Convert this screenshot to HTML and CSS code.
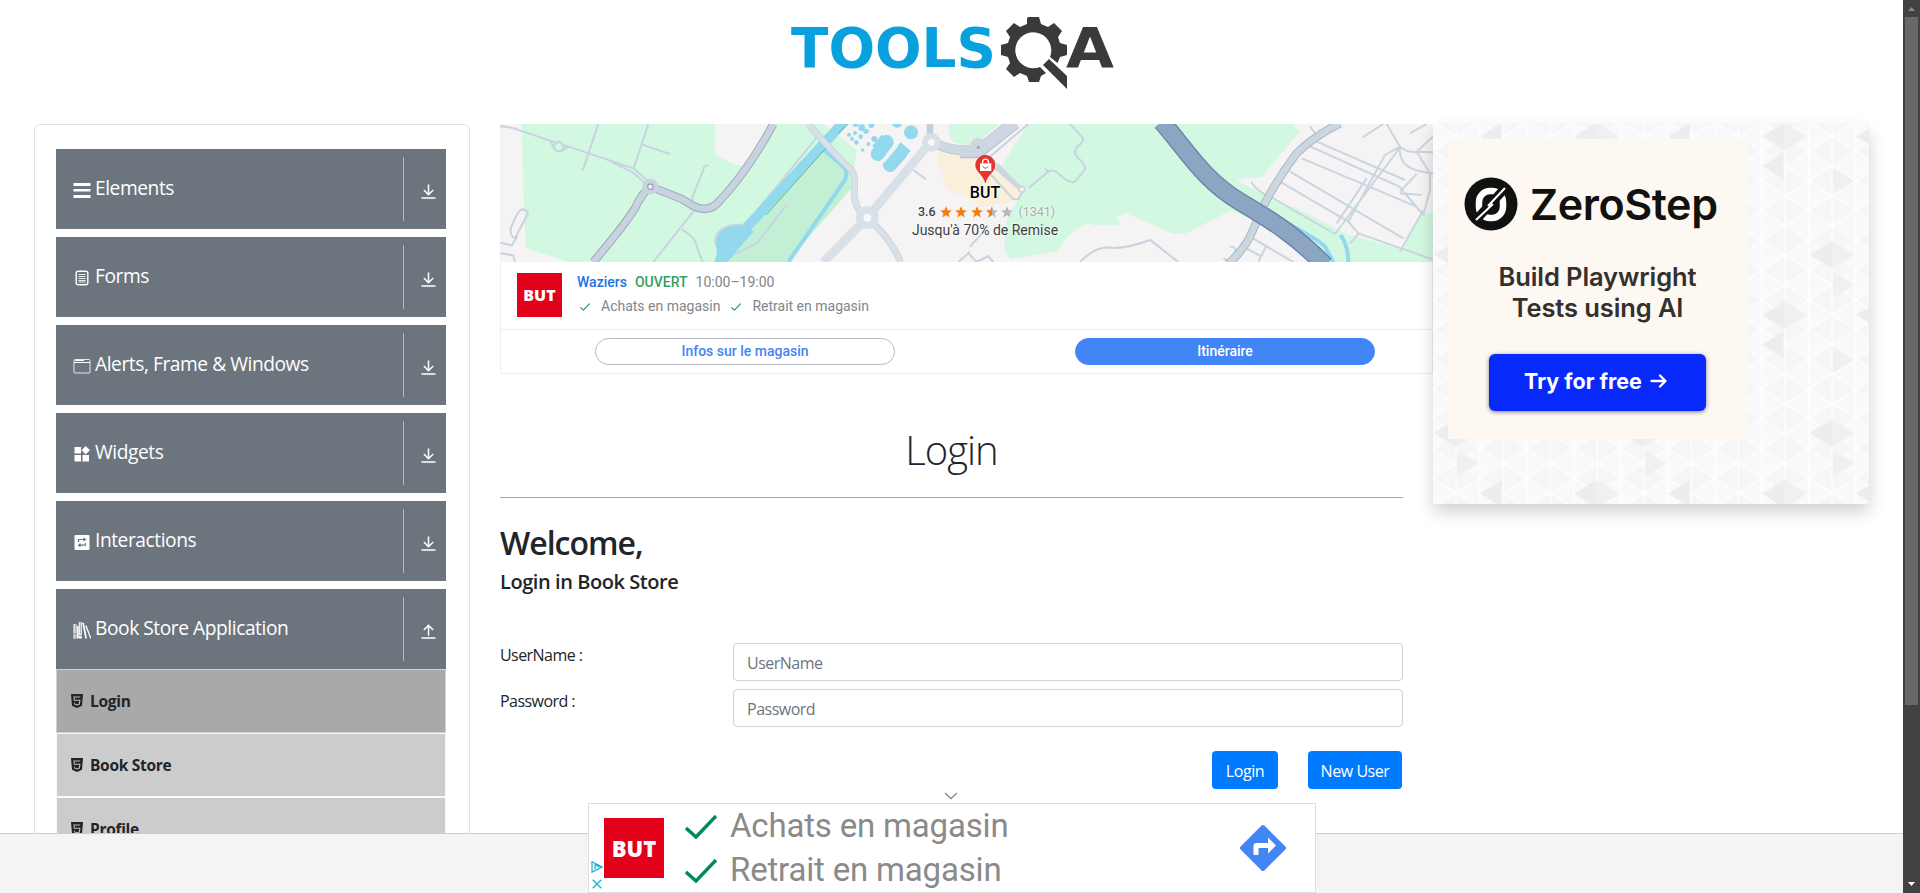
FILE: index.html
```html
<!DOCTYPE html>
<html lang="en">
<head>
<meta charset="utf-8">
<title>ToolsQA</title>
<link rel="stylesheet" href="styles.css">
</head>
<body>
<svg class="defs" width="0" height="0">
  <defs>
    <symbol id="down" viewBox="0 0 16 17"><path d="M8 1v11M3 7l5 5 5-5M.5 15.5h15"/></symbol>
    <symbol id="up" viewBox="0 0 16 17"><path d="M8 13V2M3 7l5-5 5 5M.5 15.5h15"/></symbol>
    <symbol id="html5" viewBox="0 0 12 14"><path fill="#212529" d="M0 0h12l-1 11.800L6 14l-5-2.200z"/><path fill="none" stroke="#bbb" stroke-width="1.100" d="M9.200 3H3l.3 3.300h5.500l-.4 3.700L6 11l-2.300-.8-.1-1.400"/></symbol>
    <symbol id="tick" viewBox="0 0 32 24"><path fill="none" stroke="#018a5f" stroke-width="3.400" d="M1 13l10 9L31 1"/></symbol>
    <symbol id="star" viewBox="0 0 12 12"><path d="M6 .3l1.600 3.900 4.200.3-3.200 2.700 1 4.200L6 9.100l-3.600 2.300 1-4.200L.2 4.500l4.200-.3z"/></symbol>
  </defs>
</svg>
<div class="window">
  <div class="page">
    <header class="header">
      <svg class="logo" width="330" height="84" viewBox="0 0 330 84">
        <text class="logo-tools" x="0" y="57" textLength="205" lengthAdjust="spacingAndGlyphs">TOOLS</text>
        <g fill="#3a3a3c">
          <g transform="translate(243 40)">
            <path fill-rule="evenodd" d="M-7-32Q-6-33-5-33H5L7-26 14-23 20-27 28-19 24-13 26-7 33-5V5L26 7 23.500 13 16 7A18 18 0 1 0 6 17L12 23 7 26 5 32H-5L-7 26-14 23-20 27-28 19-24 13-26 7-33 5V-5L-26-7-24-13-28-19-20-27-14-23-7-26z"/>
            <path d="M9 15l6-6 18 17v13z"/>
          </g>
        </g>
        <text class="logo-a" x="275" y="57" textLength="48" lengthAdjust="spacingAndGlyphs">A</text>
      </svg>
    </header>
    <div class="columns">
      <aside class="sidebar">
        <div class="group"><svg class="gicon" viewBox="0 0 18 18"><path fill="#fff" d="M.5 2h17v3H.5zM.5 8h17v2.500H.5zM.5 14h17v3H.5z"/></svg><span class="gname">Elements</span><span class="toggle"><svg><use href="#down"/></svg></span></div>
        <div class="group"><svg class="gicon" viewBox="0 0 18 18"><rect x="3.200" y="2.200" width="11.600" height="13.600" rx="2" fill="none" stroke="#fff" stroke-width="1.400"/><path stroke="#e6e8ea" d="M5.500 5.500h7M5.500 7.500h7M5.500 9.500h7M5.500 11.500h7M5.500 13h7"/></svg><span class="gname">Forms</span><span class="toggle"><svg><use href="#down"/></svg></span></div>
        <div class="group"><svg class="gicon" viewBox="0 0 18 18"><rect x="1" y="2.500" width="16" height="13.500" rx="1" fill="none" stroke="#e8e8e8"/><path stroke="#fff" d="M1 5.500h16M2 3.500h9"/></svg><span class="gname">Alerts, Frame &amp; Windows</span><span class="toggle"><svg><use href="#down"/></svg></span></div>
        <div class="group"><svg class="gicon" viewBox="0 0 18 18"><path fill="#fff" d="M1.500 2H8v6.500H1.500zM1.500 10H8v6.500H1.500zM9.500 10H16v6.500H9.500zM12.700 1l4.200 4.200-4.200 4.200-4.200-4.200z"/></svg><span class="gname">Widgets</span><span class="toggle"><svg><use href="#down"/></svg></span></div>
        <div class="group"><svg class="gicon" viewBox="0 0 18 18"><rect x="1.500" y="2" width="15" height="15" rx="1.200" fill="#fff"/><path fill="none" stroke="#6c757d" stroke-width="1.200" d="M5.500 9V6.500h6M10.500 4.900l1.800 1.600-1.800 1.600M12.500 10v2.200h-6M7.500 10.600l-1.800 1.600 1.800 1.600"/></svg><span class="gname">Interactions</span><span class="toggle"><svg><use href="#down"/></svg></span></div>
        <div class="group open"><svg class="gicon" viewBox="0 0 18 18"><path fill="#fff" d="M.5 3h3v14.500h-3zM4 5h1.500v12.500H4zM5.800 1h3v16.500h-3zM9.200 2l1.800-.3 3 15.800h-1.700zM12.300 5l1.300-.4 4.900 12.900h-1.300z"/><path stroke="#6c757d" stroke-width=".7" d="M0 13h3.500M6 14.500h3M2.200 3v14M7.300 1v12"/></svg><span class="gname">Book Store Application</span><span class="toggle"><svg><use href="#up"/></svg></span></div>
        <div class="item active"><svg><use href="#html5"/></svg><span>Login</span></div>
        <div class="item"><svg><use href="#html5"/></svg><span>Book Store</span></div>
        <div class="item"><svg><use href="#html5"/></svg><span>Profile</span></div>
      </aside>
      <main class="main">
        <section class="ad">
          <div class="map">
            <svg width="933" height="138" viewBox="0 0 2799 414">
              <rect width="2799" height="414" fill="#f5f3f3"/>
              <g transform="translate(-30 -42)" fill="none">
                <path fill="#d3f8e2" d="M95 42H675V135L740 166H765L850 42H1000L1100 120 1085 235 1000 300 900 456H235L108 415 100 250z"/>
                <path fill="#c3f0d5" d="M1000 115L1075 190 1085 235 890 456H700L820 320z"/>
                <path fill="#d3f8e2" d="M1378 42H1440V105L1390 98Q1370 70 1378 42z"/>
                <path fill="#f9efdb" d="M1345 130L1440 140V265L1400 250Q1370 250 1358 210 1368 180 1345 170z"/>
                <path stroke="#c9d3e0" stroke-width="6" d="M30 50Q60 48 100 65L180 92 290 128 430 175 470 210M180 92Q195 125 215 122L240 108M350 148L430 188 465 220M325 42L278 182M475 42L430 178M457 104L540 132M655 165Q640 168 640 180L607 262 612 302 490 456M575 358Q620 385 620 410L638 456M978 85L770 340M770 345Q680 340 675 395L690 440M890 285L800 400 720 440M100 296Q85 296 62 355 60 380 75 384L114 310Q110 296 95 300M30 398L65 406 82 380M30 430L70 436 75 456M1270 180L1308 208M1405 456L1440 425"/>
                <circle cx="206" cy="110" r="14" fill="#d3f8e2" stroke="#c9d3e0" stroke-width="7"/>
                <path stroke="#9da9b9" stroke-width="25" d="M850 42Q770 190 680 282 650 308 610 288L575 267 482 230Q455 250 435 295 400 350 310 456"/>
                <path stroke="#c9d3e0" stroke-width="19" d="M850 42Q770 190 680 282 650 308 610 288L575 267 482 230Q455 250 435 295 400 350 310 456"/>
                <circle cx="481" cy="230" r="24" fill="#c9d3e0"/><circle cx="481" cy="230" r="8" fill="#f5f3f3" stroke="#9da9b9" stroke-width="4"/>
                <path stroke="#92d9ed" stroke-width="30" d="M1065 32L770 352"/>
                <path fill="#92d9ed" d="M770 348Q680 340 678 400 685 430 672 456H712L790 365z"/>
                <path stroke="#92d9ed" stroke-width="12" d="M1000 118L1062 172Q1075 188 1065 210L895 456"/>
                <path stroke="#5eba8c" stroke-width="3" d="M1073 42L1045 70M1010 112L828 315"/>
                <g stroke="#c5ced9" stroke-width="23"><path d="M955 42Q1040 140 1080 175 1100 195 1092 250 1095 300 1130 322L1320 98V42M1132 322L1000 456M1132 325Q1200 380 1232 456" stroke-width="20"/></g>
                <g stroke="#d8e0e8" stroke-width="19"><path d="M955 42Q1040 140 1080 175 1100 195 1092 250 1095 300 1130 322L1320 98M1132 322L1000 456M1132 325Q1200 380 1232 456" stroke-width="16"/><path stroke-width="26" d="M1132 323L1320 98M1132 323L1000 456"/></g>
                <circle cx="1132" cy="323" r="34" fill="#d8e0e8"/><circle cx="1132" cy="323" r="12" fill="#f8f8f8"/>
                <path stroke="#b7c3d2" stroke-width="30" d="M1330 98Q1380 124 1450 123"/><path stroke="#ccd7e2" stroke-width="26" d="M1330 97Q1380 123 1450 122"/>
                <circle cx="1324" cy="97" r="28" fill="#d8e0e8"/><circle cx="1324" cy="97" r="10" fill="#f8f8f8"/>
                <path stroke="#92d9ed" stroke-width="42" stroke-linecap="round" d="M1190 96L1163 132M1232 128L1200 165"/><path stroke="#92d9ed" stroke-width="36" d="M1190 85L1160 120M1220 110L1250 136"/><path stroke="#f5f3f3" stroke-width="5" d="M1222 108L1182 155"/>
                <g fill="#92d9ed"><circle cx="1263" cy="67" r="21"/><circle cx="1221" cy="38" r="15"/><circle cx="1153" cy="87" r="9"/><circle cx="1135" cy="102" r="6"/><circle cx="1118" cy="120" r="5"/><circle cx="1144" cy="45" r="9"/><circle cx="1128" cy="64" r="8"/><circle cx="1112" cy="80" r="7"/><circle cx="1099" cy="97" r="7"/><circle cx="1115" cy="53" r="10"/><circle cx="1097" cy="42" r="9"/><circle cx="1095" cy="69" r="6"/><circle cx="1077" cy="74" r="6"/><circle cx="1086" cy="86" r="6"/></g>
              </g>
              <g transform="translate(1380 -42)" fill="none">
                <path fill="#d3f8e2" d="M205 42H995L1020 65 905 210 880 202 830 210 1000 300 1140 370 1440 300V456H1120L880 330 810 302 680 370 640 372 500 310 470 322 485 345 400 346 390 340Q340 350 290 425L150 447 132 415 140 330 180 260 110 190z"/>
                <path fill="#f5f3f3" d="M830 210L905 200 1020 65 1440 42V240L1405 260 1325 425 1140 372 940 270z"/>
                <path fill="#d3f8e2" d="M31 42H120L60 90H31zM940 300L1000 290 1160 372 1440 450V456H1110z"/>
                <path fill="#f9efdb" d="M30 140H90L185 245 160 275 60 290 30 265z"/>
                <path stroke="#c9d3e0" stroke-width="6" d="M205 42L90 140M330 42L370 85Q370 98 350 112 338 130 355 145 385 170 370 185L345 215Q328 222 300 195 280 175 265 185L205 235M255 175l12 14M85 350L30 410M25 430l25 26 35-18 15 18M360 456Q400 415 440 412 490 420 570 390L655 456M110 160L180 230M80 180L160 268H175L190 240"/>
                <path stroke="#c9d6e2" stroke-width="6" d="M1025 98L1318 230 1390 315M1070 95L1335 210M1025 145L1370 290M990 185L1330 385M960 215L1165 335M935 262L1125 372M1318 115L1125 372M1220 205L1130 340M1390 300L1320 425M1280 42L1320 110 1275 135 1165 335 1195 370 1440 456M1320 110Q1345 130 1370 125L1440 60M1370 125L1440 128M1320 110Q1310 190 1440 190M1320 245L1370 192M1370 125L1410 190V240L1390 315M1350 70L1400 42M1208 82L1270 42M1320 250L1385 255M1170 400L1195 372M1050 50L1080 90M875 215Q880 235 930 262M870 380L1000 456M840 405L905 440M920 405L895 456M810 410Q830 410 825 425M790 445L810 456"/>
                <path stroke="#a2b1bd" stroke-width="25" d="M1140 40Q1060 80 1010 130 950 210 912 285L870 380Q850 420 805 462"/>
                <path stroke="#cbd6de" stroke-width="20" d="M1140 40Q1060 80 1010 130 950 210 912 285L870 380Q850 420 805 462"/>
                <path stroke="#92d9ed" stroke-width="12" d="M945 320Q1080 390 1095 410L1120 456M1142 375Q1165 410 1165 456"/>
                <path stroke="#6683ab" stroke-width="56" d="M605 35C680 120 730 210 840 275S1010 380 1095 466"/>
                <path stroke="#8ca5c2" stroke-width="48" d="M605 35C680 120 730 210 840 275S1010 380 1095 466"/>
                <path stroke="#b7c3d2" stroke-width="40" d="M0 125H55L165 38"/><path stroke="#ccd7e2" stroke-width="35" d="M0 123H55L165 38"/><circle cx="55" cy="110" r="26" fill="#ccd7e2"/><circle cx="55" cy="112" r="5" fill="#9cabba"/>
                <path stroke="#ccd7e2" stroke-width="14" d="M108 172L182 236"/><circle cx="186" cy="238" r="9" fill="#f9efdb" stroke="#ccd7e2" stroke-width="5"/>
                <path fill="#e8342b" stroke="#b92822" stroke-width="2" d="M76 218Q74 205 54 184A29 29 0 1 1 98 184Q78 205 76 218z"/>
                <path fill="#fff" d="M60 160H94V183H60z"/><path stroke="#fff" stroke-width="4" d="M68 160v-4a8 8 0 0 1 17 0v4"/><path stroke="#e8342b" stroke-width="3" d="M68 169q9 11 17 0"/>
              </g>
            </svg>
            <div class="place">
              <strong>BUT</strong>
              <div class="rating"><b>3.6</b><svg class="s"><use href="#star"/></svg><svg class="s"><use href="#star"/></svg><svg class="s"><use href="#star"/></svg><svg class="s" viewBox="0 0 12 12"><use href="#star" width="12" height="12" fill="#b5b8b5"/><svg width="6" height="12" viewBox="0 0 6 12"><use href="#star" width="12" height="12"/></svg></svg><svg class="s off"><use href="#star"/></svg><i>(1341)</i></div>
              <div class="promo">Jusqu'à 70% de Remise</div>
            </div>
          </div>
          <div class="shop">
            <div class="but small">BUT</div>
            <div class="shop-text">
              <div class="hours"><b class="blue">Waziers</b><b class="green">OUVERT</b><span>10:00–19:00</span></div>
              <div class="perks"><svg><use href="#tick"/></svg><span>Achats en magasin</span><svg><use href="#tick"/></svg><span>Retrait en magasin</span></div>
            </div>
          </div>
          <div class="actions"><span class="pill">Infos sur le magasin</span><span class="pill solid">Itinéraire</span></div>
        </section>
        <h1>Login</h1>
        <form class="form">
          <h2>Welcome,</h2>
          <h5>Login in Book Store</h5>
          <div class="row"><label>UserName :</label><input placeholder="UserName"></div>
          <div class="row"><label>Password :</label><input type="password" placeholder="Password"></div>
          <div class="buttons"><button type="button" class="b1">Login</button><button type="button" class="b2">New User</button></div>
        </form>
      </main>
      <aside class="promo-panel">
        <svg class="tiles" width="436" height="380">
          <defs>
            <pattern id="grid" width="141" height="89.200" patternUnits="userSpaceOnUse" patternTransform="translate(-13 -14) scale(.3333) translate(109 79)">
              <rect width="141" height="89.200" fill="#f9f9f9"/>
              <path fill="#f6f6f6" d="M0 0L70.500 44.600 0 89.200zM141 0V89.200L70.500 44.600z"/>
              <path fill="#fafafa" d="M70.500 44.600L141 0H70.500z"/>
              <path stroke="#fff" stroke-width="4" fill="none" d="M0 0V90M70.500 0V90M141 0V90M0 0L141 89.200M0 89.200L141 0"/>
            </pattern>
            <pattern id="marks" width="564" height="536" patternUnits="userSpaceOnUse" patternTransform="translate(-13 -14) scale(.3333) translate(460 35)">
              <g transform="translate(-460 -35)">
                <path fill="#ededed" d="M463 79L530 37V121zM745 79L809 39V119zM463 168L527 128V208zM605 434L672 392V476z"/>
                <path fill="#f0f0f0" d="M530 37L597 79 530 121zM672 392L739 434 672 476zM675 172L739 213 675 253zM675 484L739 524 675 564z"/>
                <path fill="#f1f1f1" d="M887 305L951 345 887 386z"/>
              </g>
            </pattern>
          </defs>
          <rect width="436" height="380" fill="url(#grid)"/><rect width="436" height="380" fill="url(#marks)"/>
        </svg>
        <div class="zero">
          <div class="brand"><svg width="54" height="54" viewBox="0 0 54 54"><circle cx="27" cy="27" r="26.500" fill="#11110f"/><rect x="15" y="14" width="24" height="27" rx="11" fill="none" stroke="#fff" stroke-width="6.500"/><path stroke="#11110f" stroke-width="9" d="M11 44L43 9"/><path stroke="#fff" stroke-width="2" d="M12 43L29 27M24 29L41 11"/></svg><span>ZeroStep</span></div>
          <div class="pitch"><span>Build Playwright</span><span>Tests using AI</span></div>
          <div class="cta"><span>Try for free</span><svg width="17" height="14" viewBox="0 0 17 14"><path fill="none" stroke="#fff" stroke-width="2.300" stroke-linecap="round" stroke-linejoin="round" d="M1.500 7h14M10 1.500L15.500 7 10 12.500"/></svg></div>
        </div>
      </aside>
    </div>
    <footer class="footer"></footer>
    <div class="anchor">
      <svg class="chevron" width="14" height="8" viewBox="0 0 14 8"><path fill="none" stroke="#888" stroke-width="1.300" d="M1 1l6 5.500L13 1"/></svg>
      <div class="banner">
        <div class="choices"><svg width="12" height="12" viewBox="0 0 12 12"><path fill="none" stroke="#14b0d2" stroke-width="1.200" d="M1 .8v10.400L11 6zM4 3.500v5M4 3.500L8.500 6"/></svg><svg width="10" height="10" viewBox="0 0 10 10"><path stroke="#14b0d2" stroke-width="1.300" d="M.7.700l8.600 8.600M9.300.7L.7 9.300"/></svg></div>
        <div class="but large">BUT</div>
        <div class="lines"><div><svg><use href="#tick"/></svg><span>Achats en magasin</span></div><div><svg><use href="#tick"/></svg><span>Retrait en magasin</span></div></div>
        <svg class="route" width="48" height="48" viewBox="0 0 48 48"><path fill="#4285f4" stroke="#4285f4" stroke-width="4" stroke-linejoin="round" d="M24 3l21 21-21 21L3 24z"/><path fill="#fff" d="M14.500 31V22q0-3 3-3H29v-5.500l8 8-8 8V24H19.500v7z"/></svg>
      </div>
    </div>
  </div>
  <div class="scrollbar"><svg width="7" height="4" viewBox="0 0 7 4"><path fill="#868686" d="M0 4L3.500 0 7 4z"/></svg><div class="thumb"></div><svg width="7" height="4" viewBox="0 0 7 4"><path fill="#fff" d="M0 0h7L3.500 4z"/></svg></div>
</div>
</body>
</html>
```

FILE: styles.css
```css
* { box-sizing: border-box; }
body { margin: 0; overflow: hidden; background: #fff; color: #212529; font: 16px/24px "Open Sans", "Noto Sans", sans-serif; }
.defs { position: absolute; }
.window { display: flex; width: 1920px; height: 893px; }
.page { position: relative; width: 1903px; height: 893px; overflow: hidden; }
.header { height: 124px; padding: 10px 0 0 791px; }
.logo { display: block; }
.logo-tools, .logo-a { font: bold 56px "DejaVu Sans", sans-serif; fill: #08a0dd; }
.logo-a { fill: #3a3a3c; }
.columns { display: flex; align-items: flex-start; }

.sidebar { width: 436px; height: 900px; margin-left: 34px; padding: 24px 21px; border: 1px solid #dee2e6; border-radius: 6px; }
.group { display: flex; align-items: center; width: 390px; height: 80px; margin-bottom: 8px; padding-left: 17px; background: #6c757d; color: #fff; font-size: 19.2px; }
.group.open { margin-bottom: 0; }
.gicon { width: 18px; height: 18px; margin: 1px 4px 0 0; }
.gname { flex: 1; letter-spacing: -.45px; white-space: nowrap; padding-bottom: 3px; }
.toggle { display: flex; height: 64px; width: 43px; border-left: 1px solid #b5babe; align-items: center; padding: 4px 0 0 17px; }
.toggle svg { width: 15px; height: 17px; fill: none; stroke: #fff; stroke-width: 1.6px; }
.item { display: flex; align-items: center; width: 390px; height: 64px; padding-left: 14px; gap: 7px; background: #ccc; border: 1px solid #f8f9fa; font-weight: 700; font-size: 15.5px; letter-spacing: -.3px; }
.item.active { background: #a9a9a9; border-color: #ced0d9; }
.item svg { width: 12px; height: 14px; margin-bottom: 1px; }

.main { width: 903px; margin-left: 30px; }
.ad { width: 933px; height: 250px; border: 1px solid #eee; border-top: 0; font-family: Roboto, sans-serif; }
.map { position: relative; height: 138px; width: 933px; margin-left: -1px; }
.map > svg { display: block; }
.place { position: absolute; left: 405px; top: 60px; width: 160px; text-align: center; color: #3c4043; text-shadow: 0 0 2px #fff, 0 0 2px #fff; font-size: 14px; }
.place strong { display: block; font-size: 16px; line-height: 17px; font-weight: 500; color: #000; }
.rating { display: flex; align-items: center; height: 22px; gap: 3.3px; padding-left: 13px; font-size: 12.5px; }
.rating b { font-weight: 500; margin-right: 1px; }
.rating i { font-style: normal; color: #aaa; margin-left: 2px; }
.s { width: 12px; height: 12px; fill: #f57c0a; }
.s.off { fill: #b5b8b5; }
.promo { line-height: 14px; white-space: nowrap; }
.shop { display: flex; height: 68px; padding: 11px 0 0 16px; border-bottom: 1px solid #eee; }
.but { display: flex; align-items: center; justify-content: center; background: #e2001a; color: #fff; font-family: "Open Sans", sans-serif; font-weight: 800; }
.but.small { width: 45px; height: 44px; font-size: 16px; }
.shop-text { margin-left: 15px; color: #80868b; font-size: 14px; }
.hours { display: flex; gap: 8px; height: 18px; line-height: 18px; }
.hours b { font-weight: 500; }
.blue { color: #1a73e8; }
.green { color: #34a05f; }
.perks { display: flex; align-items: center; height: 30px; }
.perks svg { width: 10px; height: 8px; margin: 2px 11px 0 3px; }
.perks span + svg { margin-left: 11px; }
.actions { display: flex; padding: 8px 0 0 94px; gap: 180px; }
.pill { width: 300px; height: 27px; border: 1px solid #b6b9c2; border-radius: 14px; color: #4285f4; font-weight: 500; font-size: 14px; line-height: 24px; text-align: center; }
.pill.solid { background: #4285f4; border-color: #4285f4; color: #fff; }
h1 { margin: 0; height: 124px; padding-top: 52px; border-bottom: 1px solid #a8a8a8; text-align: center; font-weight: 300; font-size: 40px; line-height: 48px; letter-spacing: -1px; }
.form { padding-top: 26px; }
h2 { margin: 0; font-size: 32px; line-height: 38px; font-weight: 600; letter-spacing: -1px; }
h5 { margin: 8px 0 49px; font-size: 20px; line-height: 24px; font-weight: 600; letter-spacing: -.44px; }
.row { display: flex; height: 38px; margin-bottom: 8px; }
.row label { width: 233px; letter-spacing: -.55px; }
.row input { flex: 1; height: 38px; padding: 7px 13px 5px; border: 1px solid #ced4da; border-radius: 4px; font: inherit; letter-spacing: -.5px; }
.row input::placeholder { color: #6c757d; }
.buttons { display: flex; justify-content: flex-end; gap: 30px; padding: 16px 1px 0 0; }
.buttons button { height: 38px; padding: 1px 0 0; border: 0; border-radius: 4px; background: #007bff; color: #fff; font: inherit; letter-spacing: -.45px; }
.b1 { width: 66px; }
.b2 { width: 94px; }

.promo-panel { position: relative; width: 436px; height: 380px; margin-left: 30px; padding: 15px; background: #f8f8f8; box-shadow: 0 8px 16px rgba(0, 0, 0, .18); }
.tiles { position: absolute; left: 0; top: 0; }
.zero { position: relative; width: 300px; height: 300px; padding: 37px 0 0 16px; background: #fef8f2; font-family: Inter, sans-serif; color: #11110f; }
.brand { display: flex; align-items: center; gap: 12px; height: 56px; font-size: 43px; font-weight: 600; letter-spacing: -.4px; }
.pitch { display: flex; flex-direction: column; align-items: center; width: 267px; margin-top: 29px; font-size: 25.5px; line-height: 31px; font-weight: 600; letter-spacing: -.1px; color: #33312f; }
.cta { display: flex; align-items: center; justify-content: center; gap: 8px; width: 217px; height: 57px; margin: 31px 0 0 25px; padding: 0 4px 3px 0; border-radius: 6px; background: #0829fc; color: #fff; font-size: 21.5px; font-weight: 700; box-shadow: 0 1px 4px rgba(0, 0, 60, .5); }

.footer { position: absolute; left: 0; right: 0; top: 833px; height: 60px; background: #f4f4f4; border-top: 1px solid #ccc; }
.anchor { position: absolute; left: 588px; top: 792px; width: 728px; }
.chevron { display: block; margin: 0 0 3px 356px; }
.banner { display: flex; height: 90px; background: #fff; border: 1px solid #ddd; }
.choices { display: flex; flex-direction: column; align-items: center; justify-content: flex-end; gap: 6px; width: 15px; padding-bottom: 3px; }
.but.large { width: 60px; height: 60px; margin-top: 14px; font-size: 22px; }
.lines { display: flex; flex-direction: column; margin-left: 21px; width: 500px; font: 33px/44px Roboto, sans-serif; letter-spacing: -.18px; color: #8a8a8a; }
.lines div { display: flex; align-items: center; height: 44px; white-space: nowrap; }
.lines svg { width: 32px; height: 24px; margin: 2px 13px 0 0; }
.route { margin: 20px 0 0 54px; }

.scrollbar { display: flex; flex-direction: column; align-items: center; width: 17px; height: 893px; padding-top: 7px; background: #424242; }
.thumb { width: 13px; height: 688px; margin: 6px 0 177px; background: #686868; }
```
